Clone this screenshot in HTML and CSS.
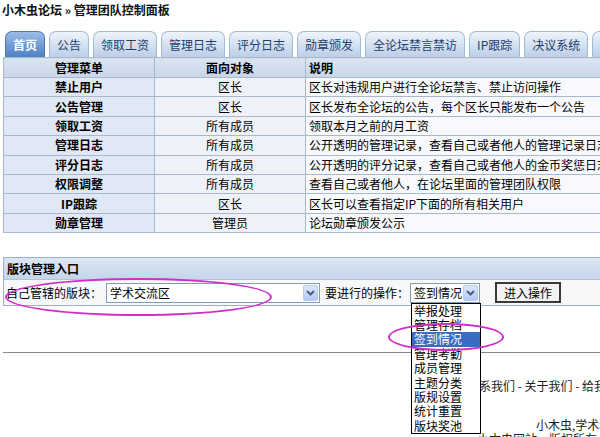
FILE: index.html
```html
<!DOCTYPE html>
<html>
<head>
  <meta charset="utf-8">
  <title>管理团队控制面板</title>
  <link rel="stylesheet" href="styles.css">
</head>
<body>
<div class="page">
  <h1 class="crumb">小木虫论坛 &raquo; 管理团队控制面板</h1>

  <ul class="tabs">
    <li class="tab active">首页</li>
    <li class="tab">公告</li>
    <li class="tab">领取工资</li>
    <li class="tab">管理日志</li>
    <li class="tab">评分日志</li>
    <li class="tab">勋章颁发</li>
    <li class="tab">全论坛禁言禁访</li>
    <li class="tab">IP跟踪</li>
    <li class="tab">决议系统</li>
    <li class="tab">版块管理</li>
  </ul>

  <table class="menu">
    <tr>
      <th class="c1">管理菜单</th>
      <th class="c2">面向对象</th>
      <th class="c3">说明</th>
    </tr>
    <tr><td class="c1">禁止用户</td><td class="c2">区长</td><td class="c3">区长对违规用户进行全论坛禁言、禁止访问操作</td></tr>
    <tr><td class="c1">公告管理</td><td class="c2">区长</td><td class="c3">区长发布全论坛的公告，每个区长只能发布一个公告</td></tr>
    <tr><td class="c1">领取工资</td><td class="c2">所有成员</td><td class="c3">领取本月之前的月工资</td></tr>
    <tr><td class="c1">管理日志</td><td class="c2">所有成员</td><td class="c3">公开透明的管理记录，查看自己或者他人的管理记录日志</td></tr>
    <tr><td class="c1">评分日志</td><td class="c2">所有成员</td><td class="c3">公开透明的评分记录，查看自己或者他人的金币奖惩日志</td></tr>
    <tr><td class="c1">权限调整</td><td class="c2">所有成员</td><td class="c3">查看自己或者他人，在论坛里面的管理团队权限</td></tr>
    <tr><td class="c1">IP跟踪</td><td class="c2">区长</td><td class="c3">区长可以查看指定IP下面的所有相关用户</td></tr>
    <tr><td class="c1">勋章管理</td><td class="c2">管理员</td><td class="c3">论坛勋章颁发公示</td></tr>
  </table>

  <div class="entry">
    <div class="entry-head">版块管理入口</div>
    <div class="entry-body">
      <span class="label">自己管辖的版块：</span>
      <div class="combo combo-forum">
        <span class="combo-text">学术交流区</span>
        <span class="combo-arrow"><svg width="9" height="6" viewBox="0 0 9 6"><path d="M1 1 L4.5 4.5 L8 1" fill="none" stroke="#4d6185" stroke-width="2"/></svg></span>
      </div>
      <span class="label label-op">要进行的操作：</span>
      <div class="combo combo-op">
        <span class="combo-text">签到情况</span>
        <span class="combo-arrow"><svg width="9" height="6" viewBox="0 0 9 6"><path d="M1 1 L4.5 4.5 L8 1" fill="none" stroke="#4d6185" stroke-width="2"/></svg></span>
        <ul class="droplist">
          <li>举报处理</li>
          <li>管理存档</li>
          <li class="selected">签到情况</li>
          <li>管理考勤</li>
          <li>成员管理</li>
          <li>主题分类</li>
          <li>版规设置</li>
          <li>统计重置</li>
          <li>版块奖池</li>
        </ul>
      </div>
      <button class="go">进入操作</button>
    </div>
  </div>

  <hr class="rule">

  <div class="footer">
    <p class="links">联系我们 - 关于我们 - 给我们留言 - 广告服务</p>
    <p class="slogan">小木虫,学术科研互动第一站</p>
    <p class="copy">小木虫网站，版权所有</p>
  </div>

  <!-- annotation circles drawn over the screenshot -->
  <div class="ring ring-forum"></div>
  <div class="ring ring-op"></div>
</div>
</body>
</html>
```

FILE: styles.css
```css
body {
  margin: 0;
  background: #fff;
  color: #000;
  font-family: "Noto Sans CJK SC", sans-serif;
  font-size: 12px;
  overflow: hidden;
}
.page {
  position: relative;
  width: 900px;
  margin-left: 3px;
}
.crumb {
  margin: 0 0 0 -1px;
  padding-top: 2px;
  height: 29px;
  font-size: 12px;
  line-height: 16px;
  font-weight: bold;
  color: #111;
}

/* tabs */
.tabs {
  display: flex;
  gap: 4px;
  margin: 0;
  padding: 0 0 0 2px;
  list-style: none;
  height: 26px;
}
.tab {
  padding: 0 7px;
  border: 1px solid #a3bad7;
  border-bottom: none;
  border-radius: 7px 7px 0 0;
  background: linear-gradient(#eef4fb, #bccfe7);
  color: #1e3e70;
  line-height: 25px;
  white-space: nowrap;
}
.tab.active {
  background: linear-gradient(#9dbde6, #4f80c5);
  border-color: #4f78b5;
  color: #fff;
  font-weight: bold;
}

/* table */
.menu {
  width: 800px;
  border-collapse: collapse;
  border: 1px solid #9fb0c6;
}
.menu th, .menu td {
  border: 1px solid #a9b8cb;
  height: 18.4px;
  padding: 0 3px;
  line-height: 18px;
  white-space: nowrap;
}
.menu th {
  height: 19px;
  background: linear-gradient(#dbe5f1, #c8d6e8);
  font-weight: bold;
}
.menu .c1 {
  width: 144px;
  text-align: center;
  font-weight: bold;
}
.menu .c2 {
  width: 144px;
  text-align: center;
}
.menu .c3 {
  text-align: left;
}
.menu td.c1 {
  background: #dfe8f4;
}
.menu td.c2 {
  background: #eef2f8;
}
.menu td.c3 {
  background: #f7f9fc;
}

/* forum entry */
.entry {
  width: 798px;
  margin-top: 24px;
  border: 1px solid #9fb0c6;
}
.entry-head {
  height: 21px;
  line-height: 21px;
  padding-left: 3px;
  border-bottom: 1px solid #b5c3d5;
  background: linear-gradient(#dde7f3, #c5d5ea);
  font-weight: bold;
}
.entry-body {
  display: flex;
  align-items: center;
  height: 25px;
  padding-left: 2px;
  background: #f7f8fa;
}
.label-op {
  margin-left: 5px;
}
.combo {
  position: relative;
  display: flex;
  align-items: center;
  height: 18px;
  border: 1px solid #7f9db9;
  background: #fff;
}
.combo-forum {
  width: 212px;
  margin-left: 4px;
}
.combo-op {
  width: 68px;
  margin-left: 1px;
}
.combo-text {
  flex: 1;
  padding-left: 3px;
  line-height: 18px;
}
.combo-arrow {
  display: flex;
  align-items: center;
  justify-content: center;
  width: 15px;
  height: 16px;
  margin-right: 1px;
  border: 1px solid #b9cbef;
  border-radius: 2px;
  background: linear-gradient(#dde7fb, #b4c8f2);
  box-sizing: border-box;
}
.droplist {
  position: absolute;
  top: 19px;
  left: 0;
  z-index: 2;
  width: 68px;
  margin: 0;
  padding: 0;
  list-style: none;
  border: 1px solid #000;
  background: #fff;
}
.droplist li {
  height: 14.4px;
  line-height: 14px;
  padding-left: 2px;
  font-size: 12px;
}
.droplist .selected {
  background: #3a6cc4;
  color: #fff;
}
.go {
  margin-left: 15px;
  width: 66px;
  height: 21px;
  padding: 0;
  border: 2px solid #3a3a3a;
  background: #f3f3f1;
  font-family: inherit;
  font-size: 12px;
  color: #000;
}

.rule {
  width: 900px;
  margin: 46px 0 0 0;
  border: none;
  border-top: 1px solid #8a8a8a;
}

.footer p {
  margin: 0;
  color: #222;
  white-space: nowrap;
}
.footer .links {
  margin-top: 24px;
  padding-left: 464px;
}
.footer .slogan {
  margin-top: 22px;
  padding-left: 533px;
}
.footer .copy {
  margin-top: -3px;
  padding-left: 474px;
}

.ring {
  position: absolute;
  z-index: 3;
  border: 2px solid #d12fc9;
  border-radius: 50%;
}
.ring-forum {
  left: 2px;
  top: 278px;
  width: 263px;
  height: 34px;
}
.ring-op {
  left: 385px;
  top: 323px;
  width: 112px;
  height: 24px;
}
```
